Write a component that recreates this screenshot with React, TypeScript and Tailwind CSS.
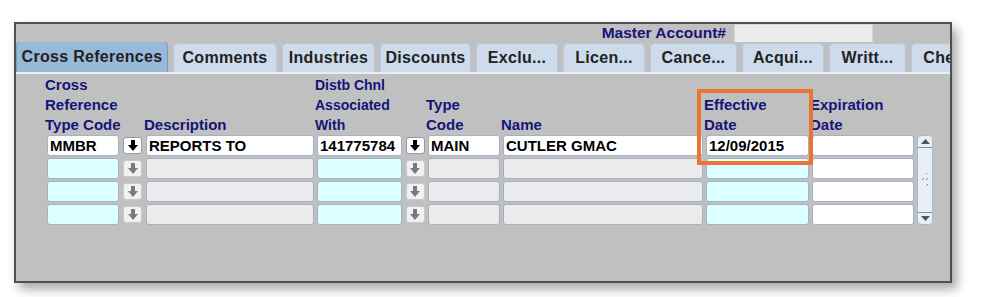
import React from "react";

const tabs: { label: string; w: string; active?: boolean }[] = [
  { label: "Cross References", w: "w-[152px]", active: true },
  { label: "Comments", w: "w-[104px]" },
  { label: "Industries", w: "w-[93px]" },
  { label: "Discounts", w: "w-[91px]" },
  { label: "Exclu...", w: "w-[82px]" },
  { label: "Licen...", w: "w-[82px]" },
  { label: "Cance...", w: "w-[87px]" },
  { label: "Acqui...", w: "w-[82px]" },
  { label: "Writt...", w: "w-[77px]" },
  { label: "Che...", w: "w-[70px]" },
];

const WHITE = "bg-white";
const CYAN = "bg-[#dcffff]";
const GRAY = "bg-[#ebebeb]";

type Cell = { kind: "field"; bg: string; text?: string } | { kind: "arrow"; dark: boolean };

const firstRow: Cell[] = [
  { kind: "field", bg: WHITE, text: "MMBR" },
  { kind: "arrow", dark: true },
  { kind: "field", bg: WHITE, text: "REPORTS TO" },
  { kind: "field", bg: WHITE, text: "141775784" },
  { kind: "arrow", dark: true },
  { kind: "field", bg: WHITE, text: "MAIN" },
  { kind: "field", bg: WHITE, text: "CUTLER GMAC" },
  { kind: "field", bg: WHITE, text: "12/09/2015" },
  { kind: "field", bg: WHITE },
];

const emptyRow: Cell[] = [
  { kind: "field", bg: CYAN },
  { kind: "arrow", dark: false },
  { kind: "field", bg: GRAY },
  { kind: "field", bg: CYAN },
  { kind: "arrow", dark: false },
  { kind: "field", bg: GRAY },
  { kind: "field", bg: GRAY },
  { kind: "field", bg: CYAN },
  { kind: "field", bg: WHITE },
];

const rows = [firstRow, emptyRow, emptyRow, emptyRow];

const COLS =
  "grid grid-cols-[72px_21px_168px_85px_20px_72px_200px_103px_102px_16px] gap-x-[3px]";

function DownArrow({ dark }: { dark: boolean }) {
  return (
    <div
      className={`flex h-[17px] w-[19px] items-center justify-center rounded-[3px] border ${
        dark ? "border-[#8a9db3] bg-white" : "border-[#c3ccd6] bg-[#f1f1f1]"
      }`}
    >
      <svg width="10" height="11" viewBox="0 0 10 11">
        <rect x="3" y="0" width="4" height="5" fill={dark ? "#000" : "#7a7a7a"} />
        <polygon points="0,5 10,5 5,11" fill={dark ? "#000" : "#7a7a7a"} />
      </svg>
    </div>
  );
}

function Header({ lines, small }: { lines: string[]; small?: boolean }) {
  return (
    <div className="-ml-[2px] flex flex-col justify-end whitespace-nowrap">
      {lines.map((l, i) => (
        <div
          key={i}
          className={`leading-[20px] font-bold text-[#14147a] ${small ? "text-[14px]" : "text-[15px]"}`}
        >
          {l}
        </div>
      ))}
    </div>
  );
}

export default function App() {
  return (
    <div
      className="min-h-[297px] bg-white pl-[14px] pt-[22px]"
      style={{ fontFamily: '"Liberation Sans", Arial, sans-serif' }}
    >
      <div className="relative h-[261px] w-[938px] overflow-hidden border-2 border-[#4f4f4f] bg-[#c0c0c0] shadow-[5px_6px_10px_rgba(0,0,0,0.35)]">
        {/* master account */}
        <div className="flex h-[18px] items-center justify-end pr-[77px]">
          <span className="mr-[8px] text-[15.5px] font-bold leading-[18px] text-[#14147a]">
            Master Account#
          </span>
          <div className="h-[18px] w-[139px] rounded-t-[2px] border border-b-0 border-[#d8d8d8] bg-[#ececec]" />
        </div>

        {/* tabs */}
        <div className="flex h-[30px] items-end gap-[5px] overflow-hidden">
          {tabs.map((t) => (
            <div
              key={t.label}
              className={`flex shrink-0 items-center justify-center whitespace-nowrap rounded-t-[5px] border border-b-0 text-[16px] font-bold tracking-[0.3px] text-[#222] ${t.w} ${
                t.active
                  ? "h-[31px] border-[#7d9dbd] bg-[#98b9d9]"
                  : "h-[29px] border-[#b8c9db] bg-[#cddbeb]"
              }`}
            >
              {t.label}
            </div>
          ))}
        </div>
        <div className="h-[2px] bg-[#e6edf5]" />

        {/* headers */}
        <div className={`${COLS} mt-[1px] h-[60px] pl-[31px]`}>
          <Header lines={["Cross", "Reference", "Type Code"]} />
          <div />
          <Header lines={["Description"]} />
          <Header lines={["Distb Chnl", "Associated", "With"]} small />
          <div />
          <Header lines={["Type", "Code"]} />
          <Header lines={["Name"]} />
          <Header lines={["Effective", "Date"]} />
          <Header lines={["Expiration", "Date"]} />
          <div />
        </div>

        {/* rows */}
        <div className={`${COLS} grid-rows-[21px_21px_21px_21px] gap-y-[2px] pl-[31px]`}>
          {rows.map((row, r) => (
            <React.Fragment key={r}>
              {row.map((c, i) =>
                c.kind === "arrow" ? (
                  <div key={i} className="flex items-center justify-center">
                    <DownArrow dark={c.dark} />
                  </div>
                ) : (
                  <div
                    key={i}
                    className={`h-[21px] overflow-hidden whitespace-nowrap rounded-[3px] border border-[#a4b3c4] pl-[2px] text-[15px] font-bold leading-[19px] text-black ${c.bg}`}
                  >
                    {c.text}
                  </div>
                )
              )}
              {r === 0 && (
                <div className="row-span-4 flex flex-col rounded-[4px] border border-[#a8bacd] bg-[#e8eff7]">
                  <div className="flex h-[12px] items-center justify-center border-b border-[#7f8fa3]">
                    <svg width="9" height="5" viewBox="0 0 9 5">
                      <polygon points="0,5 9,5 4.5,0" fill="#4c5566" />
                    </svg>
                  </div>
                  <div className="flex flex-1 items-center justify-center">
                    <svg width="8" height="14" viewBox="0 0 8 14">
                      <line x1="5" y1="1" x2="7" y2="-1" stroke="#7d8a99" strokeWidth="1" />
                      <line x1="1" y1="7" x2="3" y2="5" stroke="#7d8a99" strokeWidth="1" />
                      <line x1="5" y1="7" x2="7" y2="5" stroke="#7d8a99" strokeWidth="1" />
                      <line x1="5" y1="13" x2="7" y2="11" stroke="#7d8a99" strokeWidth="1" />
                    </svg>
                  </div>
                  <div className="flex h-[12px] items-center justify-center border-t border-[#7f8fa3]">
                    <svg width="9" height="5" viewBox="0 0 9 5">
                      <polygon points="0,0 9,0 4.5,5" fill="#4c5566" />
                    </svg>
                  </div>
                </div>
              )}
            </React.Fragment>
          ))}
        </div>

        {/* highlight box */}
        <div className="pointer-events-none absolute left-[681px] top-[65px] h-[76px] w-[116px] border-4 border-[#ec7432]" />
      </div>
    </div>
  );
}
